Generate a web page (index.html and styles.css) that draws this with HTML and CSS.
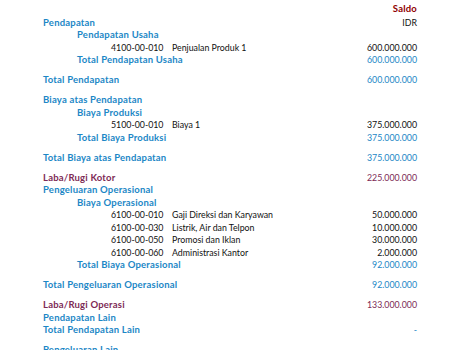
FILE: index.html
```html
<!DOCTYPE html>
<html>
<head>
<meta charset="utf-8">
<link rel="stylesheet" href="styles.css">
</head>
<body>
<div class="report">
  <div class="row head"><span></span><span class="val saldo">Saldo</span></div>
  <div class="row l1 b blue"><span>Pendapatan</span><span class="val cur">IDR</span></div>
  <div class="row l2 b blue"><span>Pendapatan Usaha</span><span class="val"></span></div>
  <div class="row l3"><span class="code">4100-00-010</span><span class="desc">Penjualan Produk 1</span><span class="val">600.000.000</span></div>
  <div class="row l2 b blue"><span>Total Pendapatan Usaha</span><span class="val num">600.000.000</span></div>
  <div class="gap"></div>
  <div class="row l1 b blue"><span>Total Pendapatan</span><span class="val num">600.000.000</span></div>
  <div class="gap"></div>
  <div class="row l1 b blue"><span>Biaya atas Pendapatan</span><span class="val"></span></div>
  <div class="row l2 b blue"><span>Biaya Produksi</span><span class="val"></span></div>
  <div class="row l3"><span class="code">5100-00-010</span><span class="desc">Biaya 1</span><span class="val">375.000.000</span></div>
  <div class="row l2 b blue"><span>Total Biaya Produksi</span><span class="val num">375.000.000</span></div>
  <div class="gap"></div>
  <div class="row l1 b blue"><span>Total Biaya atas Pendapatan</span><span class="val num">375.000.000</span></div>
  <div class="gap"></div>
  <div class="row l1 b red"><span>Laba/Rugi Kotor</span><span class="val num">225.000.000</span></div>
  <div class="row l1 b blue"><span>Pengeluaran Operasional</span><span class="val"></span></div>
  <div class="row l2 b blue"><span>Biaya Operasional</span><span class="val"></span></div>
  <div class="row l3"><span class="code">6100-00-010</span><span class="desc">Gaji Direksi dan Karyawan</span><span class="val">50.000.000</span></div>
  <div class="row l3"><span class="code">6100-00-030</span><span class="desc">Listrik, Air dan Telpon</span><span class="val">10.000.000</span></div>
  <div class="row l3"><span class="code">6100-00-050</span><span class="desc">Promosi dan Iklan</span><span class="val">30.000.000</span></div>
  <div class="row l3"><span class="code">6100-00-060</span><span class="desc">Administrasi Kantor</span><span class="val">2.000.000</span></div>
  <div class="row l2 b blue"><span>Total Biaya Operasional</span><span class="val num">92.000.000</span></div>
  <div class="gap"></div>
  <div class="row l1 b blue"><span>Total Pengeluaran Operasional</span><span class="val num">92.000.000</span></div>
  <div class="gap"></div>
  <div class="row l1 b red"><span>Laba/Rugi Operasi</span><span class="val num">133.000.000</span></div>
  <div class="row l1 b blue"><span>Pendapatan Lain</span><span class="val"></span></div>
  <div class="row l1 b blue"><span>Total Pendapatan Lain</span><span class="val num">-</span></div>
  <div class="gap"></div>
  <div class="row l1 b blue"><span>Pengeluaran Lain</span><span class="val"></span></div>
</div>
</body>
</html>
```
FILE: styles.css
```css
html, body {
  margin: 0;
  padding: 0;
  background: #ffffff;
}
.report {
  font-family: Lato, "Open Sans", sans-serif;
  font-size: 8.8px;
  color: #111111;
  padding-top: 2px;
  padding-right: 49px;
  box-sizing: border-box;
  width: 466px;
}
.row {
  display: flex;
  align-items: center;
  height: 12.5px;
  line-height: 12.5px;
  white-space: nowrap;
}
.row.head {
  height: 14.5px;
}
.gap {
  height: 7.5px;
}
.val {
  margin-left: auto;
  text-align: right;
}
.l1 { padding-left: 43px; }
.l2 { padding-left: 77px; }
.l3 { padding-left: 111px; }
.code {
  width: 61px;
}
.b > span:first-child {
  font-weight: 700;
  font-size: 9.5px;
  letter-spacing: 0.2px;
}
.b .val { font-weight: 400; }
.blue { color: #1c87c6; }
.red { color: #7d2a55; }
.saldo {
  color: #900000;
  font-weight: 700;
  font-size: 9.5px;
  letter-spacing: 0.2px;
}
.cur { color: #111111; }
```
